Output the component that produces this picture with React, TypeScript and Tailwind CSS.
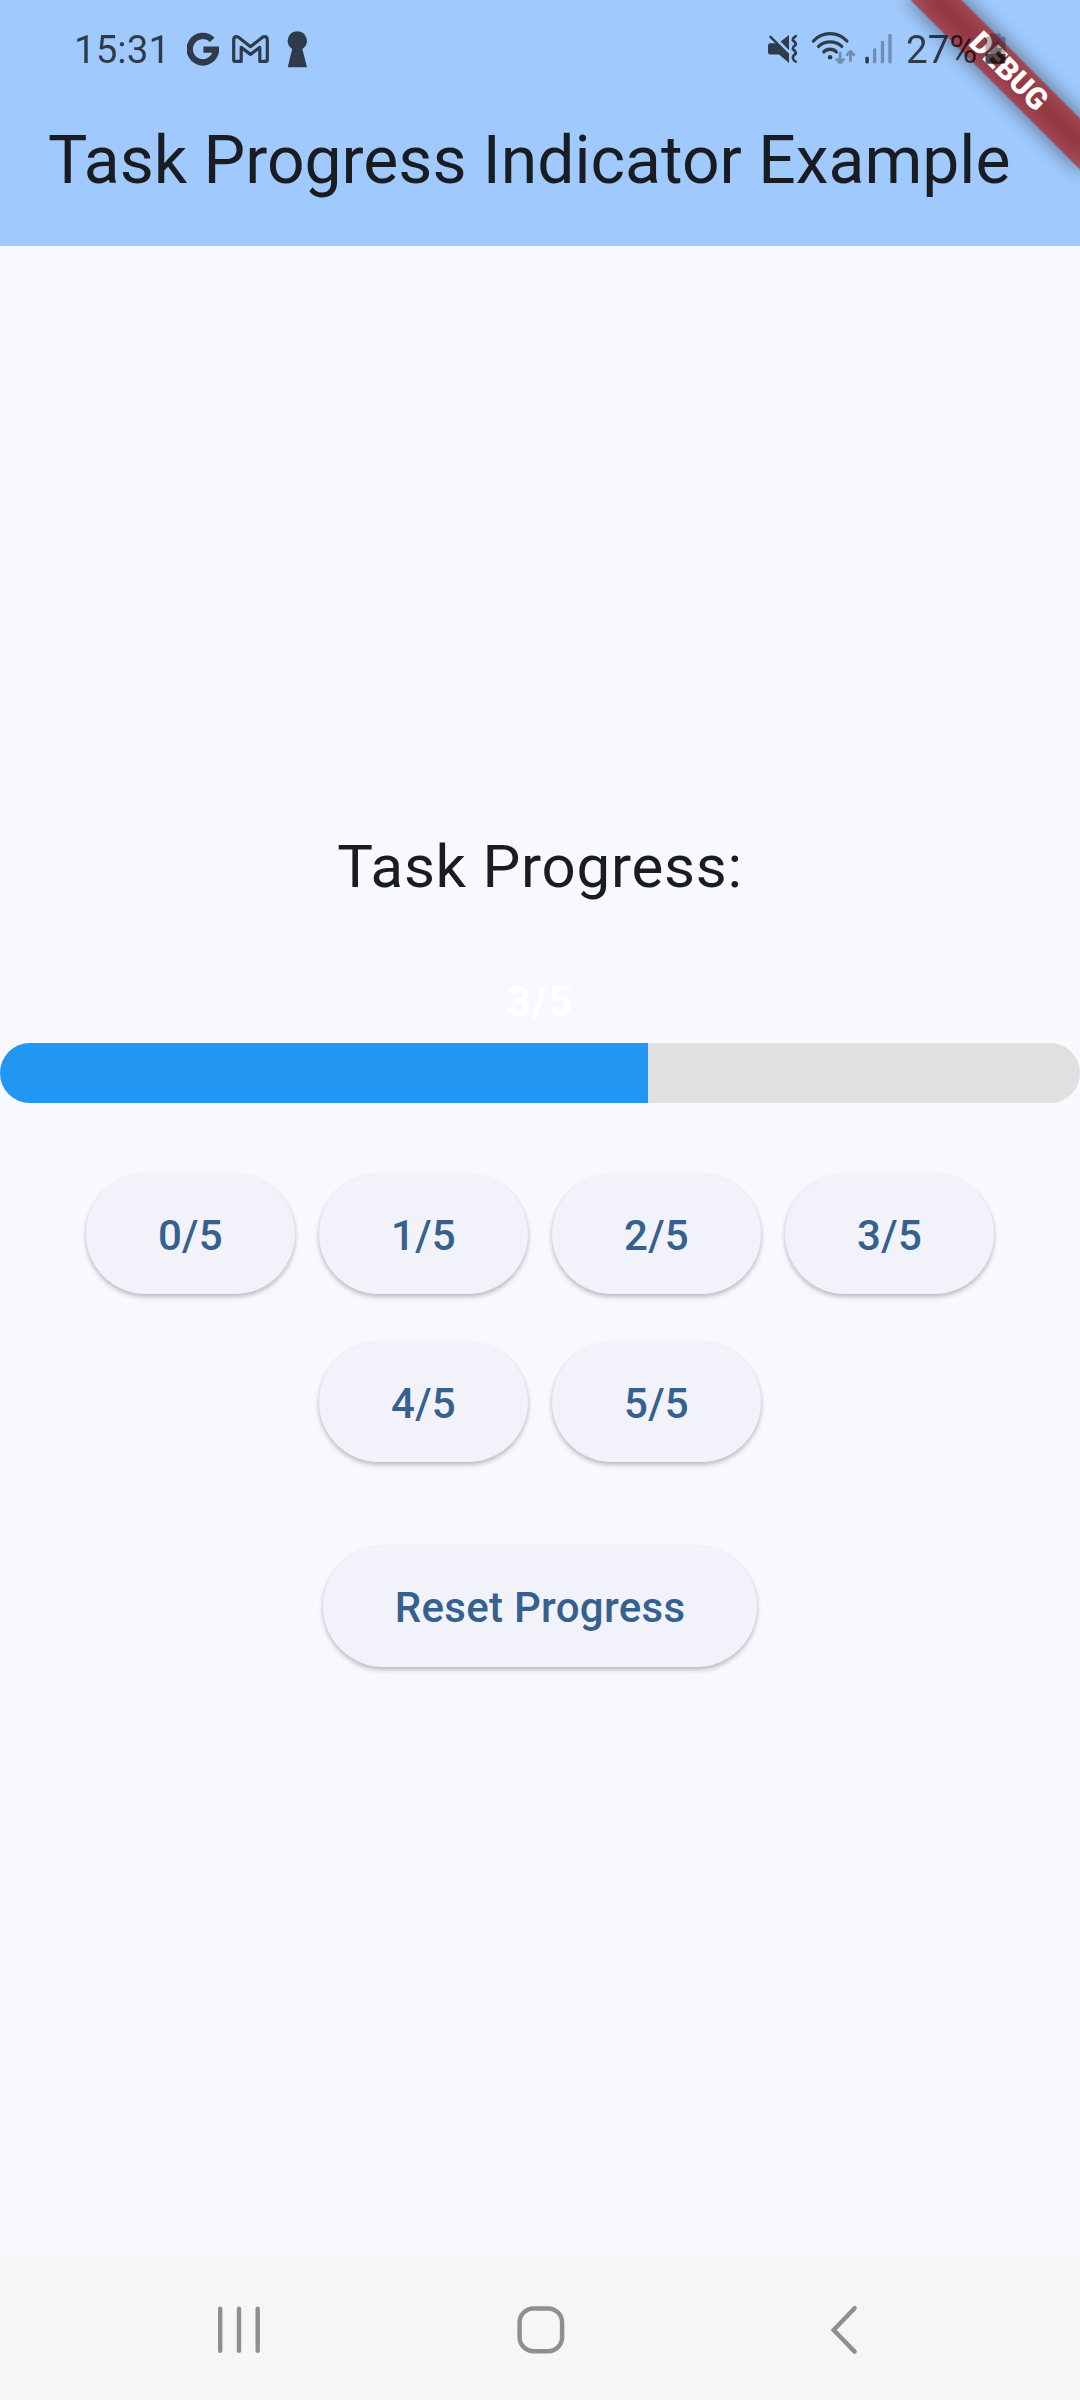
import { useState } from 'react';

const TOTAL = 5;

function GoogleIcon() {
  return (
    <svg width="33" height="35" viewBox="0 0 33 35" fill="none" stroke="currentColor" strokeWidth="6.4">
      <path d="M25.2 7.9A13.1 13.3 0 1 0 28.9 17.6M16.4 17.6H32" />
    </svg>
  );
}

function MailIcon() {
  return (
    <svg width="37" height="29" viewBox="0 0 37 29" fill="none" stroke="currentColor" strokeWidth="3.2" strokeLinejoin="round">
      <path d="M1.7 25V4.8Q1.7 1.6 4.4 1.6Q5.6 1.6 6.8 2.5L18.5 11.7L30.2 2.5Q31.4 1.6 32.6 1.6Q35.3 1.6 35.3 4.8V25Q35.3 26.4 33.8 26.4H27.8V12.4L18.5 19.4L9.2 12.4V26.4H3.2Q1.7 26.4 1.7 25Z" />
    </svg>
  );
}

function KeyholeIcon() {
  return (
    <svg width="21" height="37" viewBox="0 0 21 37" fill="currentColor">
      <path d="M10.3 .2A9.6 9.6 0 0 1 15.4 17.9L20 36.2H.7L5.2 17.9A9.6 9.6 0 0 1 10.3 .2Z" />
    </svg>
  );
}

function MuteIcon() {
  return (
    <svg width="32" height="30" viewBox="0 0 32 30" fill="currentColor">
      <path d="M1 11.5Q1 9.3 3 9.3H9.8L22 21V28.9L12 20.5H3Q1 20.5 1 18.5Z" />
      <path d="M13.6 7.6L22 1V16.2Z" />
      <g fill="none" stroke="currentColor" strokeLinecap="round" strokeLinejoin="round">
        <path d="M3.5 2.8L21 20.3" strokeWidth="2.4" />
        <path d="M28.8 2.2Q25.6 4 25.8 6.4Q29.2 8.6 28.8 10.8Q25.6 13 25.8 15.2Q29.2 17.4 28.8 19.6Q25.6 21.8 25.8 24Q26.4 26.6 28.8 27.6" strokeWidth="2.6" />
      </g>
    </svg>
  );
}

function WifiIcon() {
  return (
    <svg width="46" height="36" viewBox="0 0 46 36" fill="none" stroke="currentColor" strokeLinecap="round" strokeLinejoin="round">
      <g strokeWidth="3.3">
        <path d="M2.4 10A22.8 22.8 0 0 1 35.9 10" />
        <path d="M7.5 15.4A17 17 0 0 1 30.8 15.4" />
        <path d="M12.8 20.9A8.8 8.8 0 0 1 25.4 20.9" />
      </g>
      <circle cx="19.1" cy="26.2" r="2.3" fill="currentColor" stroke="none" />
      <g strokeWidth="2.9" opacity="0.42">
        <path d="M29.1 22.2V31.8M25.8 28.5L29.1 31.9L32.4 28.5" />
        <path d="M39.5 29.7V20.4M36.2 23.8L39.5 20.4L42.8 23.8" />
      </g>
    </svg>
  );
}

function SignalIcon() {
  return (
    <svg width="27" height="30" viewBox="0 0 27 30" fill="currentColor">
      <rect x=".3" y="22.7" width="3.6" height="6.8" rx="1.4" />
      <g opacity="0.42">
        <rect x="8" y="14.3" width="3.3" height="15.2" rx="1.4" />
        <rect x="15.8" y="6.7" width="3.3" height="22.8" rx="1.4" />
        <rect x="23.3" y="0" width="3.4" height="29.5" rx="1.4" />
      </g>
    </svg>
  );
}

function BatteryIcon() {
  return (
    <svg width="21" height="32" viewBox="0 0 21 32" fill="currentColor">
      <path d="M5 .5H15.5V3.6H18.5Q20.5 3.6 20.5 5.6V21H.5V5.6Q.5 3.6 2.5 3.6H5Z" opacity="0.42" />
      <path d="M.5 21H20.5V28.5Q20.5 30.8 18.2 30.8H2.8Q.5 30.8 .5 28.5Z" />
      <path d="M14 7L5 18V21H15.5L17.5 15H12.5Z" opacity="0.6" />
    </svg>
  );
}

function StatusBar() {
  return (
    <div className="relative z-20 flex h-[98px] items-center pl-[74px] pr-[74px] text-black opacity-70">
      <span className="w-[113px] pt-[2px] text-[38.6px] leading-none">15:31</span>
      <GoogleIcon />
      <div className="ml-[12px]"><MailIcon /></div>
      <div className="ml-[18px]"><KeyholeIcon /></div>
      <div className="ml-auto"><MuteIcon /></div>
      <div className="ml-[12px]"><WifiIcon /></div>
      <div className="ml-[8px]"><SignalIcon /></div>
      <span className="ml-[14px] w-[79px] pt-[2px] text-[38.6px] leading-none">27%</span>
      <BatteryIcon />
    </div>
  );
}

function DebugBanner() {
  return (
    <div className="absolute right-0 top-0 z-10 h-[240px] w-[240px] overflow-hidden">
      <div className="absolute left-[17.9px] top-[54.1px] h-[36px] w-[300px] rotate-45">
        <div className="absolute inset-y-0 left-[30px] right-[30px] bg-black/50 blur-[10.5px]" />
        <div className="absolute inset-y-0 -left-[20px] -right-[20px] flex items-center justify-center bg-[#b71c1c]/[0.63] pb-[1.5px] text-[30.2px] font-black leading-none text-white">
          DEBUG
        </div>
      </div>
    </div>
  );
}

function ElevatedButton({ label, onClick }: { label: string; onClick: () => void }) {
  return (
    <button
      onClick={onClick}
      className="h-[120.5px] rounded-full bg-[#f2f3fa] px-[72px] pt-[4px] text-[42px] font-medium leading-none tracking-[0.3px] text-[#36618e] shadow-[0_3px_5px_rgba(0,0,0,0.22),0_1px_4px_rgba(0,0,0,0.06)]"
    >
      {label}
    </button>
  );
}

function NavBar() {
  return (
    <nav className="flex h-[144px] items-center bg-[#f6f6f6] pl-[217px] pt-[4px] text-[#8f8f8f]">
      <svg width="44" height="48" viewBox="0 0 44 48" stroke="currentColor" strokeWidth="4.4" strokeLinecap="round">
        <path d="M3.2 2.8V44.8M22 2.8V44.8M40.7 2.8V44.8" />
      </svg>
      <svg className="ml-[256px]" width="48" height="48" viewBox="0 0 48 48" fill="none" stroke="currentColor" strokeWidth="4.5">
        <rect x="2.6" y="2.4" width="42.5" height="42.8" rx="14" />
      </svg>
      <svg className="ml-[264px]" width="29" height="50" viewBox="0 0 29 50" fill="none" stroke="currentColor" strokeWidth="4.4" strokeLinecap="round" strokeLinejoin="miter">
        <path d="M25.6 3.2L4.7 25L25.6 46.6" />
      </svg>
    </nav>
  );
}

export default function App() {
  const [done, setDone] = useState(3);

  return (
    <div className="relative flex h-[2400px] w-[1080px] flex-col overflow-hidden bg-[#f8f9ff] font-[Roboto,sans-serif] text-[#191c20]">
      <header className="h-[246px] bg-[#a0cafd]">
        <StatusBar />
        <h1 className="whitespace-nowrap pl-[48px] pt-[23.5px] text-[66px] leading-[78px]">Task Progress Indicator Example</h1>
      </header>
      <DebugBanner />

      <main className="flex flex-1 flex-col items-center">
        <p className="mt-[577.5px] text-[60px] leading-[86px] tracking-[0.75px]">Task Progress:</p>
        <p className="mt-[62px] text-[42px] font-bold leading-[60px] tracking-[0.75px] text-white">
          {done}/{TOTAL}
        </p>
        <div className="mt-[11px] h-[60px] w-full overflow-hidden rounded-full bg-[#e0e0e0]">
          <div className="h-full bg-[#2196f3]" style={{ width: `${(done / TOTAL) * 100}%` }} />
        </div>
        <div className="mt-[71px] flex w-[984px] flex-wrap justify-center gap-x-6 gap-y-[47.5px]">
          {Array.from({ length: TOTAL + 1 }, (_, n) => (
            <ElevatedButton key={n} label={`${n}/${TOTAL}`} onClick={() => setDone(n)} />
          ))}
        </div>
        <div className="mt-[84px]">
          <ElevatedButton label="Reset Progress" onClick={() => setDone(0)} />
        </div>
      </main>

      <NavBar />
    </div>
  );
}
